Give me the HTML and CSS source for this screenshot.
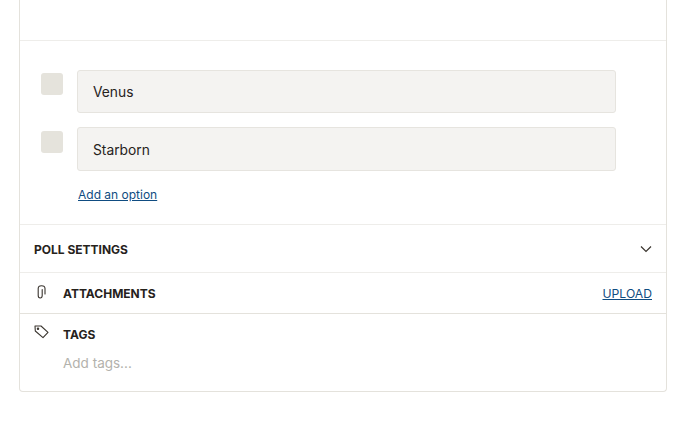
FILE: index.html
```html
<!DOCTYPE html>
<html lang="en">
<head>
    <meta charset="UTF-8">
    <title>New poll</title>
    <link rel="stylesheet" href="styles.css">
</head>
<body>
    <div class="card">
        <div class="card-top"></div>

        <div class="options">
            <div class="option">
                <span class="option-check"></span>
                <input class="option-input" type="text" value="Venus">
            </div>
            <div class="option option-tall">
                <span class="option-check"></span>
                <input class="option-input" type="text" value="Starborn">
            </div>
            <a class="add-option" href="#">Add an option</a>
        </div>

        <div class="row settings-row">
            <span class="row-title settings-title">POLL SETTINGS</span>
            <svg class="chevron" width="12" height="8" viewBox="0 0 12 8" fill="none" stroke="#3a352f" stroke-width="1.2">
                <path d="M1 1.5 6 6.5 11 1.5"/>
            </svg>
        </div>

        <div class="row attach-row">
            <svg class="row-icon" width="16" height="16" viewBox="0 0 16 16" fill="none" stroke="#3a352f" stroke-width="1.1" stroke-linecap="round">
                <path d="M8.200 5.500v6C8.200 13.200 7.400 14 6.200 14s-2-.8-2-2.500v-7C4.200 2.700 5.500 1.700 7.500 1.700S11 2.700 11 4.500V10"/>
            </svg>
            <span class="row-title">ATTACHMENTS</span>
            <a class="upload" href="#">UPLOAD</a>
        </div>

        <div class="tags">
            <div class="tags-head">
                <svg class="row-icon" width="16" height="16" viewBox="0 0 16 16" fill="none" stroke="#3a352f" stroke-width="1.1" stroke-linejoin="round">
                    <path d="M1 2h6l7 6.300-5 5.400L1.300 7z"/>
                    <circle cx="4" cy="4.700" r=".7"/>
                </svg>
                <span class="row-title">TAGS</span>
            </div>
            <div class="tags-hint">Add tags...</div>
        </div>
    </div>
</body>
</html>
```

FILE: styles.css
```css
* {
    box-sizing: border-box;
}

body {
    margin: 0;
    padding: 0 19px;
    background-color: #FFFFFF;
    font-family: Inter, "Liberation Sans", sans-serif;
    color: #26221c;
}

.card {
    width: 648px;
    border: 1px solid #e4e2dc;
    border-top: none;
    border-radius: 0 0 4px 4px;
}

.card-top {
    height: 41px;
    border-bottom: 1px solid #eeedea;
}

.options {
    height: 183px;
    padding: 29px 50px 0 21px;
    display: flex;
    flex-direction: column;
}

.option {
    display: flex;
    gap: 14px;
    margin-bottom: 14px;
}

.option-check {
    flex: none;
    width: 22px;
    height: 22px;
    margin-top: 3px;
    background-color: #e5e3dc;
    border-radius: 3px;
}

.option-input {
    flex: 1;
    height: 43px;
    padding: 0 15px;
    background-color: #f4f3f1;
    border: 1px solid #e6e4df;
    border-radius: 3px;
    font-family: inherit;
    font-size: 13.8px;
    color: #26221c;
}

.option-tall .option-check {
    margin-top: 4px;
}

.option-tall .option-input {
    height: 44px;
    padding-top: 2px;
}

.add-option {
    align-self: flex-start;
    margin: 1px 0 0 37px;
    font-size: 12px;
    line-height: 18px;
    color: #0f4c81;
}

.row {
    display: flex;
    align-items: center;
    padding: 0 14px;
}

.settings-row {
    height: 48px;
    padding-top: 2px;
    border-top: 1px solid #eeedea;
    justify-content: space-between;
}

.settings-title {
    font-size: 12.4px;
}

.chevron {
    margin-top: -2px;
}

.attach-row {
    height: 42px;
    padding-top: 1px;
    border-top: 1px solid #eeedea;
    border-bottom: 1px solid #e4e2dc;
}

.row-title {
    font-size: 12px;
    font-weight: 700;
    color: #26221c;
}

.row-icon {
    flex: none;
    margin-right: 13px;
}

.attach-row .row-icon {
    margin-top: -4px;
}

.upload {
    margin-left: auto;
    font-size: 12.2px;
    color: #0f4c81;
}

.tags {
    height: 77px;
    padding: 10px 14px 0;
}

.tags-head {
    display: flex;
    align-items: center;
    height: 20px;
}

.tags-head .row-icon {
    margin-top: -4px;
}

.tags-hint {
    margin: 9px 0 0 29px;
    font-size: 13.5px;
    line-height: 20px;
    color: #b3b2ac;
}
```
